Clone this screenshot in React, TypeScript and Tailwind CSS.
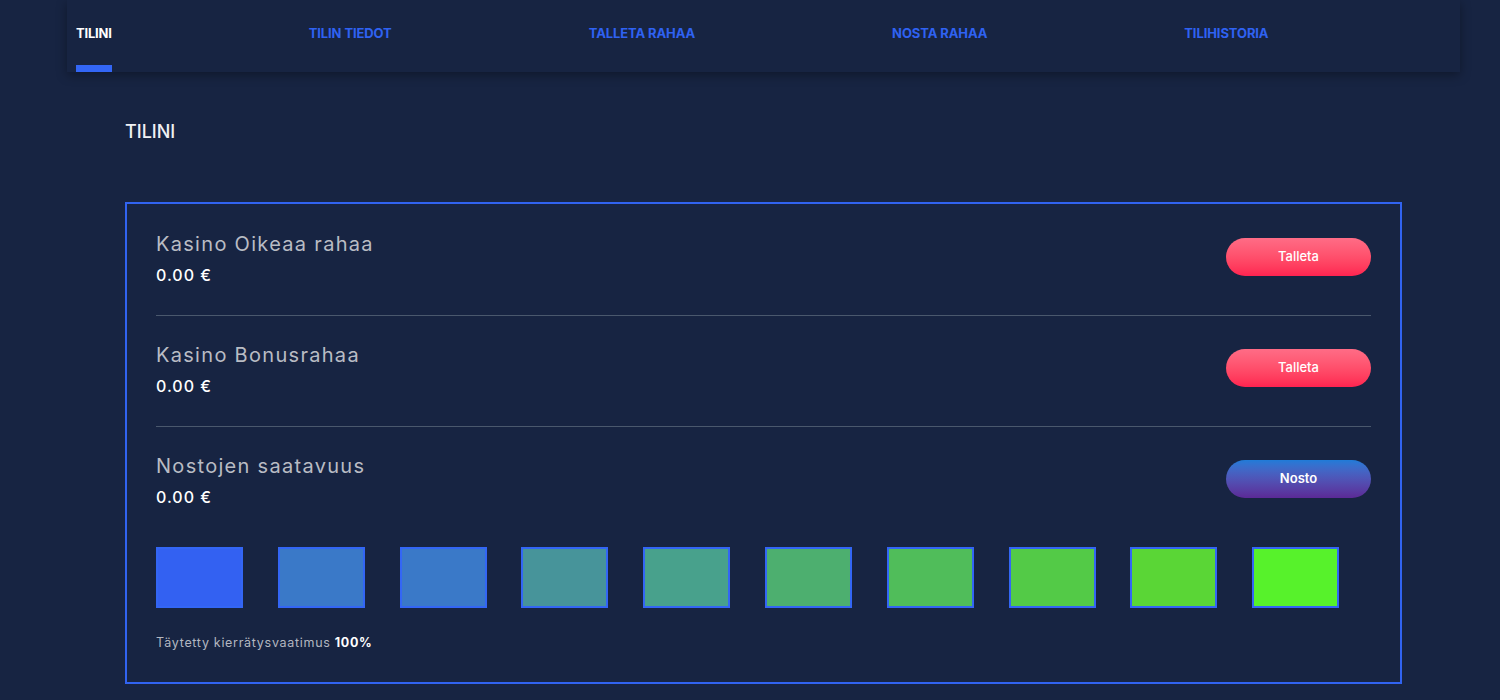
const tabs = ["TILINI", "TILIN TIEDOT", "TALLETA RAHAA", "NOSTA RAHAA", "TILIHISTORIA"];

const squares = [
  "bg-[#3361f2]",
  "bg-[#3a79c8]",
  "bg-[#3a79c8]",
  "bg-[#47949a]",
  "bg-[#48a18c]",
  "bg-[#4daf6f]",
  "bg-[#50bd5a]",
  "bg-[#53ca47]",
  "bg-[#5ad636]",
  "bg-[#57f22b]",
];

function Balance({ title, button, blue }: { title: string; button: string; blue?: boolean }) {
  return (
    <div className="flex items-start justify-between">
      <div>
        <div className="text-[20px] leading-[30px] tracking-[1.3px] text-[#b9bcc4]">{title}</div>
        <div className="mt-[4px] text-[16px] leading-[24px] font-medium tracking-[1px] text-white">0.00 €</div>
      </div>
      <button
        className={
          blue
            ? "mt-[9px] h-[38px] w-[145px] rounded-full bg-gradient-to-b from-[#1f7bd8] to-[#5b2996] text-[13px] font-semibold text-white"
            : "mt-[9px] h-[38px] w-[145px] rounded-full bg-gradient-to-b from-[#ff6c86] to-[#ff2250] text-[13px] font-medium text-white"
        }
      >
        {button}
      </button>
    </div>
  );
}

export default function App() {
  return (
    <div className="min-h-[700px] bg-[#172442] font-['Inter',sans-serif]">
      <div className="ml-[67px] w-[1393px]">
        <nav className="flex h-[72px] gap-[197px] bg-[#172442] pl-[9px] shadow-[0_3px_10px_rgba(0,0,0,0.35)]">
          {tabs.map((t, i) => (
            <div key={t} className="flex flex-col pt-[24px]">
              <span
                className={
                  i === 0
                    ? "text-[13px] leading-[18px] font-bold tracking-[-0.2px] text-white"
                    : "text-[13px] leading-[18px] font-bold tracking-[-0.1px] text-[#2f62f2]"
                }
              >
                {t}
              </span>
              {i === 0 && <div className="mt-auto h-[7px] w-full bg-[#3366f5]" />}
            </div>
          ))}
        </nav>

        <div className="px-[58px]">
          <h1 className="mt-[46px] text-[18px] leading-[27px] font-medium text-[#f0f1f4]">TILINI</h1>

          <div className="mt-[57px] border-2 border-[#3163f0] px-[29px] pt-[25px] pb-[30px]">
            <Balance title="Kasino Oikeaa rahaa" button="Talleta" />
            <div className="mt-[28px] mb-[24px] h-px bg-[#4a586d]" />
            <Balance title="Kasino Bonusrahaa" button="Talleta" />
            <div className="mt-[28px] mb-[24px] h-px bg-[#4a586d]" />
            <Balance title="Nostojen saatavuus" button="Nosto" blue />

            <div className="mt-[38px] flex gap-[34.8px]">
              {squares.map((c, i) => (
                <div key={i} className={`h-[61px] w-[87px] shrink-0 border-2 border-[#3366f5] ${c}`} />
              ))}
            </div>

            <div className="mt-[26px] text-[12.5px] leading-[18px] tracking-[0.7px] text-[#b3b7c0]">
              Täytetty kierrätysvaatimus <span className="font-bold text-white">100%</span>
            </div>
          </div>
        </div>
      </div>
    </div>
  );
}
